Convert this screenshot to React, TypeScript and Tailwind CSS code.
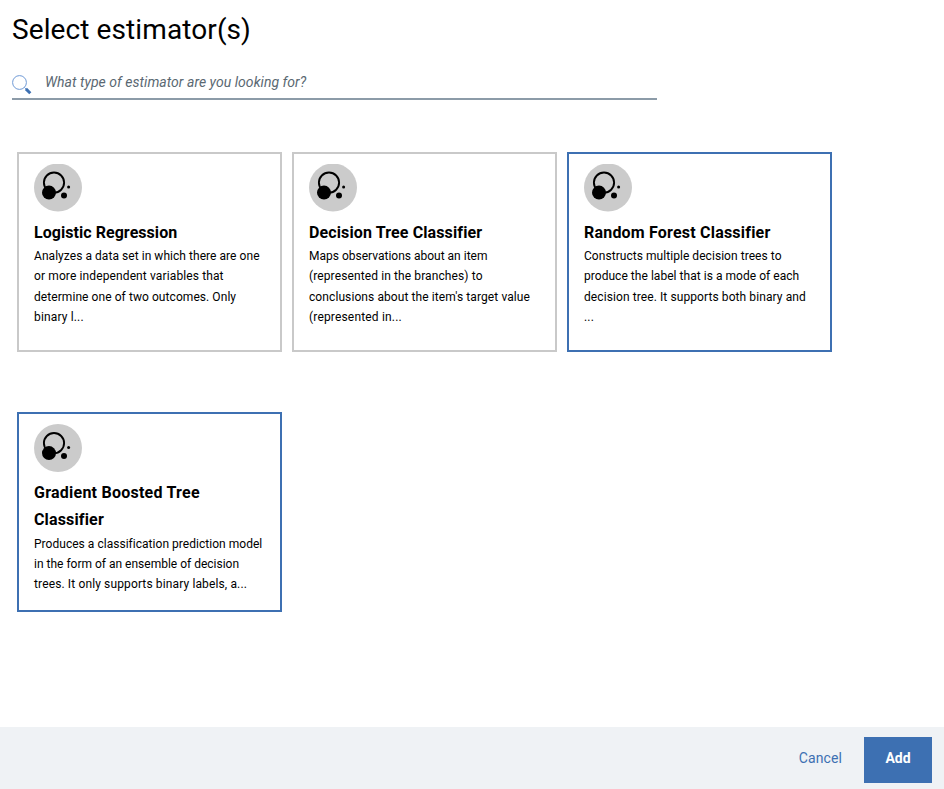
type Line = { text: string; className: string };

type Estimator = {
  title: Line[];
  description: Line[];
  selected: boolean;
};

const estimators: Estimator[] = [
  {
    title: [{ text: "Logistic Regression", className: "tracking-[0.05px]" }],
    description: [
      { text: "Analyzes a data set in which there are one", className: "tracking-[0.05px]" },
      { text: "or more independent variables that", className: "tracking-[0.12px]" },
      { text: "determine one of two outcomes. Only", className: "mt-px tracking-[0.07px]" },
      { text: "binary l...", className: "tracking-[0.15px]" },
    ],
    selected: false,
  },
  {
    title: [{ text: "Decision Tree Classifier", className: "tracking-[0.12px]" }],
    description: [
      { text: "Maps observations about an item", className: "tracking-normal" },
      { text: "(represented in the branches) to", className: "tracking-[0.11px]" },
      { text: "conclusions about the item's target value", className: "mt-px tracking-[0.09px]" },
      { text: "(represented in...", className: "tracking-[0.17px]" },
    ],
    selected: false,
  },
  {
    title: [{ text: "Random Forest Classifier", className: "tracking-[0.2px]" }],
    description: [
      { text: "Constructs multiple decision trees to", className: "tracking-[0.05px]" },
      { text: "produce the label that is a mode of each", className: "tracking-[0.04px]" },
      { text: "decision tree. It supports both binary and", className: "mt-px tracking-[0.09px]" },
      { text: "...", className: "tracking-[0.15px]" },
    ],
    selected: true,
  },
  {
    title: [
      { text: "Gradient Boosted Tree", className: "tracking-[0.24px]" },
      { text: "Classifier", className: "tracking-[0.15px]" },
    ],
    description: [
      { text: "Produces a classification prediction model", className: "mt-px tracking-[0.03px]" },
      { text: "in the form of an ensemble of decision", className: "tracking-normal" },
      { text: "trees. It only supports binary labels, a...", className: "tracking-[0.13px]" },
    ],
    selected: true,
  },
];

function EstimatorIcon({ offset }: { offset: number }) {
  return (
    <svg className="block size-12 shrink-0" viewBox={`0 ${offset} 48 48`}>
      <circle cx="24" cy="24" r="24" fill="#cbcbcb" />
      <circle cx="20" cy="19.1" r="10.1" fill="none" stroke="#000" strokeWidth="1.9" />
      <circle cx="15" cy="29.1" r="7" />
      <circle cx="30" cy="32" r="3" />
      <circle cx="34.6" cy="23.6" r="1.5" />
    </svg>
  );
}

function SearchIcon() {
  return (
    <svg className="block size-5 shrink-0" viewBox="0 0 20 20" fill="none">
      <circle cx="7.5" cy="7.5" r="6.9" stroke="#6f9ad6" strokeWidth="1" />
      <path d="M12.4 12.4l2 2" stroke="#6f9ad6" strokeWidth="1" />
      <path d="M13.9 13.9l4.4 4.3" stroke="#3d70b2" strokeWidth="3" />
    </svg>
  );
}

function EstimatorCard({ title, description, selected, iconOffset }: Estimator & { iconOffset: number }) {
  return (
    <button
      type="button"
      className={`flex h-[200px] w-[265px] flex-col items-start border-2 bg-white px-[15px] pt-2.5 text-left ${
        selected ? "border-[#3d70b2]" : "border-[#c9c9c9]"
      }`}
    >
      <EstimatorIcon offset={iconOffset} />
      <h2 className="mt-[7px] text-base leading-[27px] font-bold whitespace-nowrap">
        {title.map((line) => (
          <span key={line.text} className={`block ${line.className}`}>
            {line.text}
          </span>
        ))}
      </h2>
      <p className="flex flex-col text-xs leading-5 whitespace-nowrap">
        {description.map((line) => (
          <span key={line.text} className={`block ${line.className}`}>
            {line.text}
          </span>
        ))}
      </p>
    </button>
  );
}

export default function App() {
  return (
    <div className="flex h-[789px] w-[944px] flex-col bg-white font-['Roboto','Liberation_Sans',sans-serif] text-black">
      <header className="px-3 pt-[11px]">
        <h1 className="text-[28px] leading-[38px] tracking-[0.1px] whitespace-nowrap">Select estimator(s)</h1>
        <div className="mt-4 flex h-[35px] w-[645px] border-b-2 border-[#8c9ba8]">
          <div className="pt-2.5">
            <SearchIcon />
          </div>
          <span className="ml-[13px] pt-[7px] text-sm leading-5 tracking-[0.035px] whitespace-nowrap text-[#5a6872] italic">
            What type of estimator are you looking for?
          </span>
        </div>
      </header>
      <main className="mt-[52px] grid grow grid-cols-[repeat(3,265px)] content-start gap-x-2.5 gap-y-[60px] px-[17px]">
        {estimators.map((estimator, index) => (
          <EstimatorCard key={estimator.title[0].text} {...estimator} iconOffset={index < 3 ? 0.5 : 0} />
        ))}
      </main>
      <footer className="flex h-[62px] items-start justify-end bg-[#eff2f5] pt-2.5 pr-3 text-sm leading-[42px]">
        <button type="button" className="mr-[22px] tracking-[0.1px] text-[#3d70b2]">Cancel</button>
        <button type="button" className="h-[46px] w-[68px] bg-[#3d70b2] pb-1 font-bold text-white">Add</button>
      </footer>
    </div>
  );
}
